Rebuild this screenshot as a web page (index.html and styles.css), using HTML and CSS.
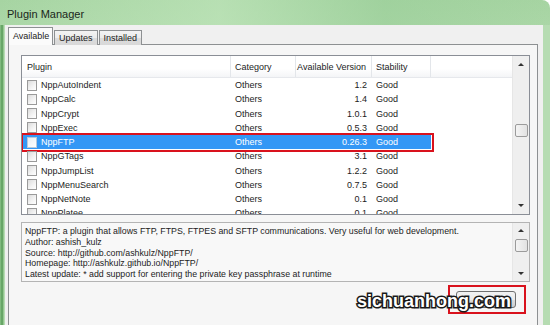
FILE: index.html
```html
<!DOCTYPE html>
<html>
<head>
<meta charset="utf-8">
<link rel="stylesheet" href="styles.css">
</head>
<body>
<div class="window">
  <div class="titlebar">Plugin Manager</div>
  <div class="frame">
    <div class="client">
      <div class="tabs">
        <div class="tab active">Available</div>
        <div class="tab">Updates</div>
        <div class="tab">Installed</div>
      </div>
      <div class="panel">
        <div class="list">
          <div class="list-main">
            <div class="header">
              <div class="c c1">Plugin</div>
              <div class="c c2">Category</div>
              <div class="c c3">Available Version</div>
              <div class="c c4">Stability</div>
            </div>
            <div class="rows">
              <div class="row"><div class="c c1"><span class="cb"></span>NppAutoIndent</div><div class="c c2">Others</div><div class="c c3">1.2</div><div class="c c4">Good</div></div>
              <div class="row"><div class="c c1"><span class="cb"></span>NppCalc</div><div class="c c2">Others</div><div class="c c3">1.4</div><div class="c c4">Good</div></div>
              <div class="row"><div class="c c1"><span class="cb"></span>NppCrypt</div><div class="c c2">Others</div><div class="c c3">1.0.1</div><div class="c c4">Good</div></div>
              <div class="row"><div class="c c1"><span class="cb"></span>NppExec</div><div class="c c2">Others</div><div class="c c3">0.5.3</div><div class="c c4">Good</div></div>
              <div class="row selected"><div class="c c1"><span class="cb"></span>NppFTP</div><div class="c c2">Others</div><div class="c c3">0.26.3</div><div class="c c4">Good</div></div>
              <div class="row"><div class="c c1"><span class="cb"></span>NppGTags</div><div class="c c2">Others</div><div class="c c3">3.1</div><div class="c c4">Good</div></div>
              <div class="row"><div class="c c1"><span class="cb"></span>NppJumpList</div><div class="c c2">Others</div><div class="c c3">1.2.2</div><div class="c c4">Good</div></div>
              <div class="row"><div class="c c1"><span class="cb"></span>NppMenuSearch</div><div class="c c2">Others</div><div class="c c3">0.7.5</div><div class="c c4">Good</div></div>
              <div class="row"><div class="c c1"><span class="cb"></span>NppNetNote</div><div class="c c2">Others</div><div class="c c3">0.1</div><div class="c c4">Good</div></div>
              <div class="row"><div class="c c1"><span class="cb"></span>NppPlatee</div><div class="c c2">Others</div><div class="c c3">0.1</div><div class="c c4">Good</div></div>
            </div>
          </div>
          <div class="vscroll">
            <div class="sb-btn"><span class="arr up"></span></div>
            <div class="sb-track big"><div class="thumb"></div></div>
            <div class="sb-btn"><span class="arr down"></span></div>
          </div>
        </div>
        <div class="desc">
          <div class="desc-text">
            <div>NppFTP: a plugin that allows FTP, FTPS, FTPES and SFTP communications. Very useful for web development.</div>
            <div>Author: ashish_kulz</div>
            <div>Source: http://github.com/ashkulz/NppFTP/</div>
            <div>Homepage: http://ashkulz.github.io/NppFTP/</div>
            <div>Latest update: * add support for entering the private key passphrase at runtime</div>
          </div>
          <div class="vscroll small">
            <div class="sb-btn"><span class="arr up"></span></div>
            <div class="sb-track"><div class="thumb"></div></div>
            <div class="sb-btn"><span class="arr down"></span></div>
          </div>
        </div>
        <div class="actions">
          <button class="btn">Install</button>
        </div>
      </div>
    </div>
  </div>
  <div class="watermark">sichuanhong.com</div>
</div>
</body>
</html>
```
FILE: styles.css
```css
html, body {
  margin: 0;
  padding: 0;
}
body {
  width: 550px;
  height: 325px;
  overflow: hidden;
  background: #ffffff;
  font-family: "Liberation Sans", Arial, sans-serif;
  font-size: 9px;
  color: #1c1c1c;
}
.window {
  position: relative;
  height: 325px;
  display: flex;
  flex-direction: column;
  background: linear-gradient(180deg, #a6d4a2 0%, #bde1b9 40%, #b4dcb0 100%);
  border-radius: 0 8px 0 0;
}
.titlebar {
  height: 25px;
  box-sizing: border-box;
  padding: 7px 0 0 7px;
  font-size: 11px;
  line-height: 14px;
  color: #1a261a;
  background: linear-gradient(90deg, rgba(255,255,255,0) 0, rgba(200,235,195,0.5) 40%, rgba(150,205,150,0.4) 70%, rgba(255,255,255,0) 100%);
  border-radius: 0 8px 0 0;
}
.frame {
  flex: 1;
  display: flex;
  min-height: 0;
  padding: 0 7px 0 5px;
  background: linear-gradient(90deg, #8cc48a 0, #5c9c5c 2px, #72b070 3px, #b6dcb2 4px, #b6dcb2 100%);
}
.client {
  flex: 1;
  min-width: 0;
  display: flex;
  flex-direction: column;
  padding: 2px 5px 0 3px;
  background: #f0f0f0;
}
.tabs {
  display: flex;
  align-items: flex-end;
  height: 18px;
  position: relative;
  z-index: 1;
  margin-bottom: -1px;
}
.tab {
  height: 15px;
  box-sizing: border-box;
  border: 1px solid #8d9092;
  border-bottom: none;
  background: linear-gradient(180deg, #f3f3f3 0%, #ebebeb 50%, #dcdcdc 51%, #d8d8d8 100%);
  padding: 0 4px;
  line-height: 14px;
  margin-left: 1px;
  color: #1c1c1c;
}
.tab.active {
  height: 18px;
  line-height: 16px;
  background: #fbfbfb;
  padding: 0 4px 0 4px;
  margin-left: 0;
  margin-right: 0;
  width: 45px;
  text-align: center;
}
.panel {
  flex: 1;
  border: 1px solid #8d9092;
  border-bottom: none;
  background: #f6f6f6;
  padding: 10px 7px 0 12px;
  display: flex;
  flex-direction: column;
}
.list {
  height: 160px;
  box-sizing: border-box;
  border: 1px solid #8a8e96;
  background: #ffffff;
  display: flex;
  overflow: hidden;
}
.list-main {
  flex: 1;
  min-width: 0;
  overflow: hidden;
}
.header {
  display: flex;
  height: 22px;
  box-sizing: border-box;
  border-bottom: 1px solid #e6e8ec;
  background: linear-gradient(180deg, #ffffff 0%, #ffffff 60%, #f4f5f7 100%);
}
.header .c {
  line-height: 22px;
  border-right: 1px solid #e3e6ea;
}
.c {
  box-sizing: border-box;
  white-space: nowrap;
  overflow: hidden;
  flex: none;
}
.c1 { width: 209px; padding-left: 5px; display: flex; align-items: center; }
.c2 { width: 65px; padding-left: 4px; }
.c3 { width: 76px; padding-right: 5px; text-align: right; }
.c4 { width: 59px; padding-left: 4px; }
.rows {
  display: flex;
  flex-direction: column;
}
.row {
  display: flex;
  width: 409px;
  height: 14.25px;
  line-height: 14px;
  position: relative;
  flex: none;
}
.cb {
  width: 10px;
  height: 11px;
  box-sizing: border-box;
  border: 1px solid #9a9a9a;
  background: linear-gradient(135deg, #dcdcdc 0%, #f4f4f4 60%, #ffffff 100%);
  margin-right: 4px;
  flex: none;
}
.row.selected {
  background: #3397f5;
  color: #ffffff;
}
.row.selected .cb {
  border-color: #b8c8da;
  background: linear-gradient(135deg, #e8eef4, #ffffff);
}
.row.selected::after {
  content: "";
  position: absolute;
  top: -2px;
  left: -1px;
  right: -3px;
  bottom: -3px;
  border: 2px solid #d9121d;
}
.vscroll {
  width: 17px;
  flex: none;
  display: flex;
  flex-direction: column;
  background: #efefef;
  border-left: 1px solid #e6e6e6;
  box-sizing: border-box;
}
.sb-btn {
  height: 17px;
  flex: none;
  display: flex;
  align-items: center;
  justify-content: center;
}
.vscroll.small .sb-btn {
  height: 15px;
}
.arr {
  width: 0;
  height: 0;
  border-left: 3px solid transparent;
  border-right: 3px solid transparent;
}
.arr.up { border-bottom: 3px solid #333; }
.arr.down { border-top: 3px solid #333; }
.sb-track {
  flex: 1;
  display: flex;
  flex-direction: column;
  align-items: center;
}
.sb-track.big {
  padding-top: 51px;
}
.thumb {
  width: 13px;
  height: 13px;
  box-sizing: border-box;
  border: 1px solid #9b9b9b;
  border-radius: 2px;
  background: linear-gradient(90deg, #f4f4f4, #e2e2e2);
  margin-top: 1px;
}
.sb-track.big .thumb {
  margin-top: 0;
}
.desc {
  margin-top: 7px;
  height: 60px;
  box-sizing: border-box;
  border: 1px solid #b4b4b4;
  background: #f8f8f8;
  display: flex;
}
.desc-text {
  flex: 1;
  min-width: 0;
  padding: 3px 0 0 3px;
  font-size: 8.8px;
  line-height: 10.8px;
  white-space: nowrap;
  overflow: hidden;
}
.actions {
  display: flex;
  justify-content: flex-end;
  padding-top: 9px;
}
.btn {
  position: relative;
  width: 60px;
  height: 17px;
  margin: 0 14px 0 0;
  padding: 0;
  border: 1px solid #707070;
  border-radius: 3px;
  background: linear-gradient(180deg, #f2f2f2 0%, #ebebeb 50%, #dddddd 51%, #cfcfcf 100%);
  font-family: "Liberation Sans", Arial, sans-serif;
  font-size: 9px;
  color: #1c1c1c;
}
.btn::after {
  content: "";
  position: absolute;
  top: -7px;
  left: -9px;
  right: -11px;
  bottom: -7px;
  border: 2px solid #d9121d;
}
.watermark {
  position: absolute;
  left: 357px;
  top: 290px;
  font-family: "Liberation Sans", Arial, sans-serif;
  font-weight: bold;
  font-size: 18px;
  line-height: 22px;
  color: #ffffff;
  -webkit-text-stroke: 3px #1a1a1a;
  paint-order: stroke fill;
  letter-spacing: 0;
}
```
